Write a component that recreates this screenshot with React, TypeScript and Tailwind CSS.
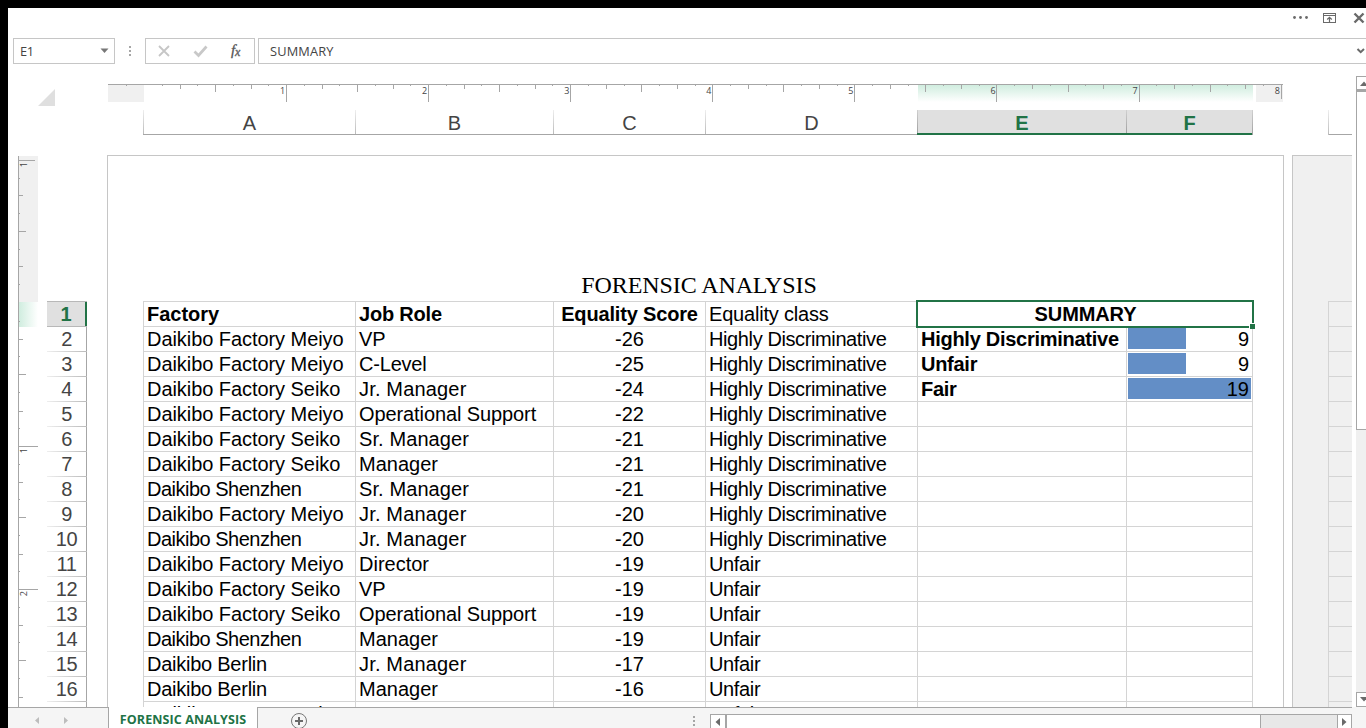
import React from "react";

const RULE = "#a6a6a6";

const rows: string[][] = [
  ["Factory", "Job Role", "Equality Score", "Equality class"],
  ["Daikibo Factory Meiyo", "VP", "-26", "Highly Discriminative"],
  ["Daikibo Factory Meiyo", "C-Level", "-25", "Highly Discriminative"],
  ["Daikibo Factory Seiko", "Jr. Manager", "-24", "Highly Discriminative"],
  ["Daikibo Factory Meiyo", "Operational Support", "-22", "Highly Discriminative"],
  ["Daikibo Factory Seiko", "Sr. Manager", "-21", "Highly Discriminative"],
  ["Daikibo Factory Seiko", "Manager", "-21", "Highly Discriminative"],
  ["Daikibo Shenzhen", "Sr. Manager", "-21", "Highly Discriminative"],
  ["Daikibo Factory Meiyo", "Jr. Manager", "-20", "Highly Discriminative"],
  ["Daikibo Shenzhen", "Jr. Manager", "-20", "Highly Discriminative"],
  ["Daikibo Factory Meiyo", "Director", "-19", "Unfair"],
  ["Daikibo Factory Seiko", "VP", "-19", "Unfair"],
  ["Daikibo Factory Seiko", "Operational Support", "-19", "Unfair"],
  ["Daikibo Shenzhen", "Manager", "-19", "Unfair"],
  ["Daikibo Berlin", "Jr. Manager", "-17", "Unfair"],
  ["Daikibo Berlin", "Manager", "-16", "Unfair"],
  ["Daikibo Factory Meiyo", "Sr. Manager", "-15", "Unfair"],
];

const summary: Record<number, { label: string; value: number }> = {
  1: { label: "Highly Discriminative", value: 9 },
  2: { label: "Unfair", value: 9 },
  3: { label: "Fair", value: 19 },
};

const tracking: Record<string, string> = {
  "Highly Discriminative": "tracking-[-0.39px]",
  "Equality class": "tracking-[-0.2px]",
  "Daikibo Factory Meiyo": "tracking-[-0.06px]",
  "Daikibo Factory Seiko": "tracking-[-0.06px]",
  "Daikibo Shenzhen": "tracking-[-0.5px]",
  "Daikibo Berlin": "tracking-[-0.25px]",
  "Jr. Manager": "tracking-[0.17px]",
  "Sr. Manager": "tracking-[0.1px]",
  "Operational Support": "tracking-[-0.1px]",
  "Unfair": "tracking-[-0.35px]",
  "C-Level": "tracking-[-0.2px]",
  "Job Role": "tracking-[-0.2px]",
  "Equality Score": "tracking-[-0.16px]",
};

const columns = [
  { name: "A", cls: "w-[212px]" },
  { name: "B", cls: "w-[198px]" },
  { name: "C", cls: "w-[152px]" },
  { name: "D", cls: "w-[212px]" },
  { name: "E", cls: "w-[209px]", selected: true },
  { name: "F", cls: "w-[126px]", selected: true },
];

function TitleBar() {
  return (
    <div className="flex h-[30px] shrink-0 justify-end">
      <svg width="76" height="22" viewBox="1290 8 76 22">
        <g fill="#6a6a6a">
          <circle cx="1294.500" cy="17.500" r="1.400" />
          <circle cx="1300.500" cy="17.500" r="1.400" />
          <circle cx="1306.500" cy="17.500" r="1.400" />
        </g>
        <path d="M1323.500 13.500h12v9h-12zM1323.500 15.500h12" fill="none" stroke="#6a6a6a" shapeRendering="crispEdges" />
        <path d="M1329.500 17v5M1327.200 19.500l2.300-2.200 2.300 2.200" fill="none" stroke="#6a6a6a" strokeWidth="1.200" />
        <path d="M1354.500 13.500l9 9M1363.500 13.500l-9 9" stroke="#6a6a6a" strokeWidth="2.400" />
      </svg>
    </div>
  );
}

function FormulaBar() {
  return (
    <div className="flex h-[26px] shrink-0 pl-[5px] font-['Open_Sans','Noto_Sans',sans-serif] text-[12.8px] text-[#444]">
      <div className="flex w-[102px] items-center justify-between border border-[#c6c6c6] pr-[5px] pl-[6px]">
        <span className="pt-px tracking-[-0.3px]">E1</span>
        <svg width="9" height="6" viewBox="0 0 9 6">
          <path d="M.5.5h8L4.500 5z" fill="#777" />
        </svg>
      </div>
      <div className="flex w-[30px] items-center justify-center">
        <svg width="2" height="10" fill="#a6a6a6" shapeRendering="crispEdges">
          <path d="M0 0h2v2H0zM0 4h2v2H0zM0 8h2v2H0z" />
        </svg>
      </div>
      <div className="flex w-[110px] items-center border border-[#c6c6c6] pl-3">
        <svg width="96" height="16" viewBox="0 0 96 16">
          <path d="M1 3l10 10M11 3L1 13" stroke="#c6c6c6" strokeWidth="1.800" />
          <path d="M36.500 8.500l4 4 8-9" fill="none" stroke="#c8c8c8" strokeWidth="2.700" />
          <text x="73" y="12" fill="#555" stroke="#555" strokeWidth="0.300" fontFamily="Liberation Serif, serif" fontStyle="italic" fontSize="15">f</text>
          <text x="77" y="13" fill="#666" stroke="#666" strokeWidth="0.400" fontFamily="Liberation Serif, serif" fontStyle="italic" fontSize="12">x</text>
        </svg>
      </div>
      <div className="ml-[3px] flex flex-1 items-center justify-between border-y border-l border-[#c6c6c6] pl-[11px]">
        <span className="pt-px tracking-[0.15px]">SUMMARY</span>
        <svg width="10" height="8" viewBox="0 0 10 8">
          <path d="M1.500 2l3.200 3.200L8 2" fill="none" stroke="#6a6a6a" strokeWidth="2" />
        </svg>
      </div>
    </div>
  );
}

function HorizontalRuler() {
  const ticks: React.ReactNode[] = [];
  for (let i = -1; i <= 64; i++) {
    if (i === 0) continue;
    const x = Math.round(144 + i * 17.76);
    const len = i === 64 ? 14 : i % 8 === 0 ? 17 : i % 4 === 0 ? 7 : i % 2 === 0 ? 4 : 1;
    ticks.push(<rect key={i} x={x} y={85} width={1} height={len} fill={RULE} />);
  }
  return (
    <svg width="1245" height="18" viewBox="107 84 1245 18" className="shrink-0">
      <defs>
        <linearGradient id="selTop" x1="0" y1="0" x2="0" y2="1">
          <stop offset="0" stopColor="#d0eddf" />
          <stop offset="1" stopColor="#fff" />
        </linearGradient>
      </defs>
      <g shapeRendering="crispEdges">
        <rect x="108" y="84" width="36" height="18" fill="#f0f0f0" />
        <rect x="1256" y="84" width="27" height="18" fill="#f0f0f0" />
        <rect x="918" y="85" width="335" height="17" fill="url(#selTop)" />
        <rect x="108" y="84" width="1175" height="1" fill={RULE} />
        {ticks}
      </g>
      <g fontFamily="Open Sans, sans-serif" fontSize="9" fill="#444" textAnchor="end">
        {[1, 2, 3, 4, 5, 6, 7, 8].map((n) => (
          <text key={n} x={143 + n * 142.1} y="94">{n}</text>
        ))}
      </g>
    </svg>
  );
}

// Eighth-inch marks; every eighth entry starts a new inch.
const verticalMarks = [
  160, 178, 195, 213, 231, 249, 266, 284, 0, 321, 339, 356, 374, 392, 411, 428,
  446, 464, 482, 499, 517, 535, 554, 571, 589, 607, 625, 642, 660, 678, 697,
];

function VerticalRuler() {
  return (
    <svg width="20" height="551" viewBox="18 156 20 551" className="mt-px ml-[10px] shrink-0">
      <defs>
        <linearGradient id="selLeft" x1="0" y1="0" x2="1" y2="0">
          <stop offset="0" stopColor="#d0eddf" />
          <stop offset="1" stopColor="#fff" />
        </linearGradient>
      </defs>
      <g shapeRendering="crispEdges">
        <rect x="18" y="156" width="20" height="146" fill="#f0f0f0" />
        <rect x="19" y="302" width="19" height="25" fill="url(#selLeft)" />
        <rect x="18" y="156" width="1" height="551" fill={RULE} />
        {verticalMarks.map((y, i) => {
          if (y === 0) return null;
          const len = i === 0 ? 16 : i % 8 === 0 ? 19 : i % 4 === 0 ? 7 : i % 2 === 0 ? 4 : 1;
          return <rect key={y} x={19} y={y} width={len} height={1} fill={RULE} />;
        })}
      </g>
      <g fontFamily="Open Sans, sans-serif" fontSize="9" fill="#444" textAnchor="end">
        <text transform="translate(27 162) rotate(-90)">1</text>
        <text transform="translate(27 448) rotate(-90)">1</text>
        <text transform="translate(27 591) rotate(-90)">2</text>
      </g>
    </svg>
  );
}

function ColumnHeaders() {
  return (
    <div className="flex h-[25px] pl-9 text-[20px] leading-[26px] text-[#444]">
      {columns.map((c) => (
        <div
          key={c.name}
          className={
            c.selected
              ? `${c.cls} flex border-b-2 border-[#217346] bg-[#e0e0e0] font-bold text-[#217346]`
              : `${c.cls} flex border-b border-[#a6a6a6]`
          }
        >
          <div className={c.selected ? "w-px bg-linear-to-b from-[#d0d0d0] to-[#a0a0a0]" : "w-px bg-linear-to-b from-[#eee] to-[#bbb]"} />
          <div className="flex-1 text-center">{c.name}</div>
        </div>
      ))}
      <div className="w-px bg-linear-to-b from-[#d0d0d0] to-[#a0a0a0]" />
      <div className="ml-[75px] w-px bg-linear-to-b from-[#eee] to-[#bbb]" />
      <div className="flex-1 border-b border-[#a6a6a6]" />
    </div>
  );
}

function RowHeaders() {
  return (
    <div className="mt-[146px] ml-[9px] w-10 shrink-0 text-[20px] text-[#444]">
      {rows.map((_, i) => (
        <div key={i} className="h-[25px]">
          <div className={i < 2 ? "h-px bg-[#b8b8b8]" : "h-px bg-linear-to-r from-[#eee] to-[#bbb]"} />
          <div
            className={
              i === 0
                ? "h-6 border-r-2 border-[#217346] bg-[#e0e0e0] text-center leading-[25px] font-bold text-[#217346]"
                : "h-6 border-r border-[#a6a6a6] text-center leading-[25px] tracking-[-0.4px]"
            }
          >
            {i + 1}
          </div>
        </div>
      ))}
    </div>
  );
}

const cell = "border-t border-l border-[#d4d4d4] pl-[3px] h-[25px] whitespace-nowrap";

function Grid() {
  return (
    <div className="relative w-[1110px] text-[20px] leading-[25px] text-black">
      {rows.map((r, i) => {
        const s = summary[i];
        return (
          <div key={i} className={i === 0 ? "flex font-bold" : "flex"}>
            <div className={`${cell} w-[212px] ${tracking[r[0]] ?? ""}`}>{r[0]}</div>
            <div className={`${cell} w-[198px] ${tracking[r[1]] ?? ""}`}>{r[1]}</div>
            <div className={`h-[25px] w-[152px] border-t border-l border-[#d4d4d4] text-center whitespace-nowrap ${tracking[r[2]] ?? ""}`}>{r[2]}</div>
            <div className={`${cell} w-[212px] font-normal ${tracking[r[3]] ?? ""}`}>{r[3]}</div>
            {i === 0 ? (
              <div className="h-[25px] w-[336px] border border-b-0 border-[#d4d4d4] pl-px text-center tracking-[-0.1px]">SUMMARY</div>
            ) : (
              <>
                <div className={`${cell} w-[209px] font-bold tracking-[-0.27px]`}>{s?.label}</div>
                <div className="grid h-[25px] w-[127px] border border-b-0 border-[#d4d4d4]">
                  {s && (
                    <>
                      <div
                        className="col-start-1 row-start-1 mt-px ml-px h-[21px] bg-[#638ec6]"
                        style={{ width: s.value === 19 ? 123 : 58 }}
                      />
                      <div className="col-start-1 row-start-1 pr-[3px] text-right">{s.value}</div>
                    </>
                  )}
                </div>
              </>
            )}
          </div>
        );
      })}
      <div className="absolute -top-px left-[773px] h-[28px] w-[338px] border-2 border-[#217346]" />
      <div className="absolute top-[22px] left-[1106px] size-[6px] border-t border-l border-white bg-[#217346]" />
    </div>
  );
}

function SheetArea() {
  return (
    <div className="flex w-[1344px] flex-col overflow-hidden">
      <div className="flex h-[91px] shrink-0 pt-5">
        <svg width="99" height="24" viewBox="8 84 99 24" className="shrink-0">
          <path d="M55 89v17H38z" fill="#dfdfdf" />
        </svg>
        <div className="flex w-[1245px] flex-col gap-2">
          <HorizontalRuler />
          <ColumnHeaders />
        </div>
      </div>
      <div className="flex h-[552px] overflow-hidden">
        <VerticalRuler />
        <RowHeaders />
        <div className="ml-5 w-[1177px] shrink-0 border-x border-t border-[#c6c6c6] pl-[35px]">
          <div className="flex h-[145px] w-[1112px] items-end justify-center font-['Liberation_Serif',serif] text-[24px] leading-[32px] text-black">
            <span className="tracking-[-0.1px]">FORENSIC ANALYSIS</span>
          </div>
          <Grid />
        </div>
        <div className="ml-2 w-[60px] shrink-0 border-t border-l border-[#c6c6c6] bg-[#f0f0f0] pt-[145px] pl-[35px]">
          {rows.map((_, i) => (
            <div key={i} className="h-[25px] border-t border-l border-[#d4d4d4]" />
          ))}
        </div>
      </div>
    </div>
  );
}

function VerticalScrollbar() {
  return (
    <div className="ml-1 flex w-[10px] flex-col overflow-hidden pt-3">
      <div className="flex h-[14px] w-4 shrink-0 items-center border border-[#a6a6a6] bg-white pl-[3px]">
        <svg width="8" height="5" viewBox="0 0 8 5" className="shrink-0"><path d="M0 5l4-4.500L8 5z" fill="#6a6a6a" /></svg>
      </div>
      <div className="h-[340px] w-4 shrink-0 border border-t-2 border-[#a6a6a6] bg-white" />
      <div className="flex-1 bg-[#f0f0f0]" />
      <div className="flex h-[15px] w-4 shrink-0 items-center border border-[#a6a6a6] bg-white pl-[3px]">
        <svg width="8" height="5" viewBox="0 0 8 5" className="shrink-0"><path d="M0 0h8L4 4.500z" fill="#6a6a6a" /></svg>
      </div>
    </div>
  );
}

function BottomBar() {
  return (
    <div className="flex h-[21px] shrink-0 overflow-hidden bg-[#f5f5f5]">
      <div className="flex w-[100px] items-start border-t border-[#a6a6a6]">
        <svg width="99" height="20" viewBox="8 708 99 20">
          <path d="M39 717v7l-4-3.500zM64 717v7l4-3.500z" fill="#bdbdbd" />
        </svg>
      </div>
      <div className="flex w-[150px] justify-center border-x border-[#a6a6a6] bg-white font-['Open_Sans','Noto_Sans',sans-serif] text-[12.5px] leading-[26px] font-bold whitespace-nowrap text-[#217346]">
        <span className="tracking-[0.1px]">FORENSIC ANALYSIS</span>
      </div>
      <div className="flex flex-1 border-t border-[#a6a6a6]">
        <svg width="452" height="20" viewBox="258 708 452 20">
          <circle cx="299" cy="721" r="7.500" fill="none" stroke="#777" />
          <path d="M295 721h8M299 717v8" stroke="#6a6a6a" strokeWidth="2" />
          <path d="M693 716h2v2h-2zM693 720h2v2h-2zM693 724h2v2h-2z" fill="#a6a6a6" />
        </svg>
        <div className="mt-[6px] flex h-[18px] w-[642px] border border-[#a6a6a6] bg-[#e8e8e8]">
          <div className="flex w-[14px] shrink-0 justify-center bg-white pt-[3px] pr-[2px]">
            <svg width="5" height="8" viewBox="0 0 5 8"><path d="M5 0v8L.5 4z" fill="#6a6a6a" /></svg>
          </div>
          <div className="w-[536px] shrink-0 border-r border-l-2 border-[#a6a6a6] bg-white" />
          <div className="flex-1" />
          <div className="flex w-[14px] shrink-0 justify-center border-l border-[#a6a6a6] bg-white pt-[3px]">
            <svg width="5" height="8" viewBox="0 0 5 8"><path d="M0 0v8l4.500-4z" fill="#6a6a6a" /></svg>
          </div>
        </div>
      </div>
      <div className="w-[14px] shrink-0" />
    </div>
  );
}

export default function App() {
  return (
    <div className="h-[728px] w-[1366px] overflow-hidden bg-black pt-2 pl-2 font-['Liberation_Sans',Arial,sans-serif]">
      <div className="flex h-[720px] flex-col bg-white">
        <TitleBar />
        <FormulaBar />
        <div className="flex h-[643px] shrink-0">
          <SheetArea />
          <VerticalScrollbar />
        </div>
        <BottomBar />
      </div>
    </div>
  );
}
